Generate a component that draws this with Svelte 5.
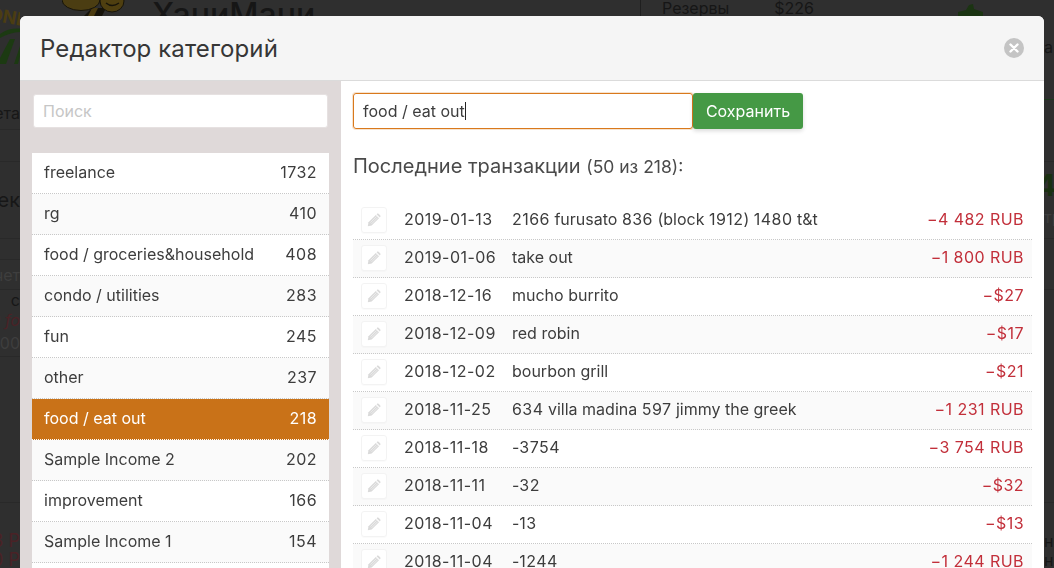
<script>
	const categories = [
		['freelance', 1732],
		['rg', 410],
		['food / groceries&household', 408],
		['condo / utilities', 283],
		['fun', 245],
		['other', 237],
		['food / eat out', 218],
		['Sample Income 2', 202],
		['improvement', 166],
		['Sample Income 1', 154],
		['travel', 121]
	];

	const transactions = [
		['2019-01-13', '2166 furusato 836 (block 1912) 1480 t&t', '−4 482 RUB'],
		['2019-01-06', 'take out', '−1 800 RUB'],
		['2018-12-16', 'mucho burrito', '−$27'],
		['2018-12-09', 'red robin', '−$17'],
		['2018-12-02', 'bourbon grill', '−$21'],
		['2018-11-25', '634 villa madina 597 jimmy the greek', '−1 231 RUB'],
		['2018-11-18', '-3754', '−3 754 RUB'],
		['2018-11-11', '-32', '−$32'],
		['2018-11-04', '-13', '−$13'],
		['2018-11-04', '-1244', '−1 244 RUB']
	];

	// rows of the page behind the modal: height, text, kind
	const leftRows = [
		[30, '', ''],
		[34, 'ета', 'line'],
		[32, '', 'line'],
		[77, 'ек', 'line big'],
		[21, '', 'line'],
		[30, 'счет', 'line faint'],
		[20, 'с', ''],
		[20, '9 fo', 'red italic'],
		[27, '000', 'faint line'],
		[146, '', 'line'],
		[27, '', ''],
		[20, '23 Р', 'red'],
		[18, '00 Р', 'red']
	];

	const rightRows = [
		[34, '', ''],
		[26, 'а', ''],
		[40, '', 'green-line'],
		[62, '', 'line'],
		[45, '4', 'digit'],
		[19, 'тр', 'faint'],
		[13, '', 'line'],
		[51, '', 'line'],
		[213, '', 'line'],
		[27, '', ''],
		[22, 'но,', ''],
		[16, 'но', '']
	];

	const selected = 'food / eat out';
</script>

<div class="page">
	<div class="strip left">
		<svg class="logo-part" width="20" height="66" viewBox="0 0 20 66">
			<text x="-12" y="22" class="logo-word" transform="rotate(10 0 22)">ONEY</text>
			<path d="M0 34 Q10 27 24 29 L24 32 Q12 31 0 38 Z" fill="#1c3a12" />
			<path d="M0 64 L0 58 L10 39 L15 39 L6 64 Z M14 64 L20 46 L20 56 L18 64 Z" fill="#1c3a12" />
		</svg>
		{#each leftRows as [height, text, kind]}
			<div class="strip-row {kind}" style="height: {height}px">{text}</div>
		{/each}
	</div>

	<div class="top">
		<svg class="bee" width="64" height="16" viewBox="0 0 64 16">
			<path d="M22 16 L30 8 L44 8 L40 16 Z" fill="#16130a" />
			<path d="M30 8 L36 8 L32 16 L26 16 Z" fill="#4b3b10" />
			<ellipse cx="19" cy="0" rx="19" ry="10.5" fill="#4b3d12" stroke="#17140a" />
			<ellipse cx="50" cy="1" rx="12" ry="11" fill="#4f3f10" stroke="#17140a" />
			<path d="M44 3 Q50 8 57 3" fill="none" stroke="#17140a" stroke-width="1.4" />
		</svg>
		<span class="brand-name">ХаниМани</span>
		<div class="stats">
			<span>Резервы</span>
			<span>$226</span>
		</div>
		<svg class="plant" width="26" height="16" viewBox="0 0 26 16">
			<path d="M0 16 L0 12 L8 10 L11 5 L15 4 L16 9 L25 12 L25 16 Z" fill="#1b3412" />
		</svg>
	</div>

	<div class="strip right">
		{#each rightRows as [height, text, kind]}
			<div class="strip-row {kind}" style="height: {height}px">{text}</div>
		{/each}
	</div>

	<div class="modal">
		<header>
			<h1>Редактор категорий</h1>
			<button class="close" aria-label="Закрыть">
				<svg width="10" height="10" viewBox="0 0 10 10">
					<path d="M1.5 1.5 L8.5 8.5 M8.5 1.5 L1.5 8.5" stroke="#fff" stroke-width="2.4" stroke-linecap="round" />
				</svg>
			</button>
		</header>

		<div class="body">
			<aside>
				<input class="search" placeholder="Поиск" />
				<ul>
					{#each categories as [name, count]}
						<li class:active={name === selected}>
							<span>{name}</span>
							<span class="num">{count}</span>
						</li>
					{/each}
				</ul>
			</aside>

			<main>
				<div class="edit-row">
					<div class="name-input">food / eat out<i class="caret"></i></div>
					<button class="save">Сохранить</button>
				</div>

				<h2>Последние транзакции <small>(50 из 218):</small></h2>

				<div class="rows">
					{#each transactions as [date, title, amount]}
						<div class="row">
							<button class="edit" aria-label="Изменить">
								<svg width="14" height="14" viewBox="0 0 14 14">
									<path d="M0.8 13.2 L1.5 9.3 L8.8 2 L12 5.2 L4.7 12.5 Z" fill="#dadada" />
									<path d="M9.6 1.2 L10.3 0.6 Q11 0.2 11.6 0.7 L13.3 2.4 Q13.8 3 13.3 3.7 L12.8 4.4 Z" fill="#dadada" />
									<path d="M3.4 9.6 L9.6 3.4 M4.6 10.8 L10.8 4.6" stroke="#f7f7f7" stroke-width="0.6" />
								</svg>
							</button>
							<span class="date num">{date}</span>
							<span class="title">
								{#each title.split(/(\d+)/) as part, i}{#if i % 2}<span class="num">{part}</span>{:else}{part}{/if}{/each}
							</span>
							<span class="amount num">{amount}</span>
						</div>
					{/each}
				</div>
			</main>
		</div>
	</div>
</div>

<style>
	:global(body) {
		margin: 0;
		overflow: hidden;
		background: #2f2f2f;
	}

	.page {
		display: flex;
		height: 568px;
		font-family: Inter, "Liberation Sans", sans-serif;
		font-size: 16px;
		color: #3d3d3d;
		overflow: hidden;
	}

	.num {
		letter-spacing: 0.45px;
	}

	.strip {
		flex: none;
		overflow: hidden;
		color: #171717;
	}

	.strip.left {
		width: 20px;
	}

	.strip.right {
		width: 10px;
	}

	.logo-part {
		display: block;
	}

	.logo-word {
		font-size: 18px;
		font-weight: 700;
		fill: #4b3d12;
	}

	.strip-row {
		box-sizing: border-box;
		display: flex;
		align-items: center;
		white-space: nowrap;
	}

	.left .strip-row {
		justify-content: flex-end;
	}

	.strip-row.line {
		border-bottom: 1px solid #292929;
	}

	.strip-row.green-line {
		border-bottom: 1px solid #1d3a1d;
	}

	.strip-row.big {
		font-size: 20px;
	}

	.strip-row.faint {
		color: #3e3e3e;
	}

	.strip-row.red {
		color: #4a2226;
		font-size: 18px;
	}

	.strip-row.italic {
		font-style: italic;
		font-size: 16px;
	}

	.strip-row.digit {
		margin-left: -8px;
		font-size: 30px;
		font-weight: 700;
		color: #1a3012;
	}

	.top {
		flex: none;
		width: 1024px;
		height: 16px;
		display: flex;
		overflow: hidden;
		color: #161616;
	}

	.bee {
		flex: none;
		margin-left: 42px;
	}

	.brand-name {
		flex: none;
		width: 488px;
		margin: -5px 0 0 26px;
		font-size: 32px;
		font-weight: 500;
		line-height: 40px;
	}

	.stats {
		flex: none;
		display: flex;
		gap: 45px;
		width: 318px;
		box-sizing: border-box;
		padding-left: 21px;
		margin-top: -8px;
		border-left: 1px solid #1f1f1f;
		height: 30px;
		line-height: 32px;
	}

	.plant {
		flex: none;
	}

	.modal {
		position: fixed;
		top: 16px;
		left: 20px;
		width: 1024px;
		height: 552px;
		background: #fff;
		border-radius: 6px 6px 0 0;
		overflow: hidden;
		display: flex;
		flex-direction: column;
	}

	header {
		flex: none;
		box-sizing: border-box;
		height: 65px;
		padding: 0 20px;
		display: flex;
		align-items: center;
		justify-content: space-between;
		background: #f5f5f5;
		border-bottom: 1px solid #dbdbdb;
	}

	h1 {
		margin: 0;
		font-size: 24px;
		font-weight: 400;
		letter-spacing: 0.1px;
		color: #363636;
	}

	.close {
		width: 20px;
		height: 20px;
		padding: 0;
		border: 0;
		border-radius: 50%;
		background: #c4c4c4;
		display: flex;
		align-items: center;
		justify-content: center;
	}

	.body {
		flex: 1;
		display: flex;
		min-height: 0;
	}

	aside {
		flex: none;
		box-sizing: border-box;
		width: 321px;
		padding: 13px 12px 0;
		background: #dfd9d9;
	}

	.search {
		display: block;
		box-sizing: border-box;
		width: 295px;
		height: 34px;
		margin: 0 1px 25px;
		padding: 0 9px;
		border: 1px solid #e6e1e1;
		border-radius: 3px;
		background: #fff;
		font: inherit;
		outline: none;
	}

	.search::placeholder {
		color: #c6c6c6;
	}

	ul {
		list-style: none;
		margin: 0;
		padding: 0;
		width: 297px;
	}

	li {
		box-sizing: border-box;
		height: 41px;
		padding: 0 12px 2px;
		display: flex;
		align-items: center;
		justify-content: space-between;
		background: #fff;
		border-bottom: 1px dotted #c8c8c8;
	}

	li:nth-child(even) {
		background: #fafafa;
	}

	li.active {
		background: #c97218;
		color: #fff;
		border-bottom-color: #fff;
	}

	main {
		flex: 1;
		min-width: 0;
		padding: 12px 12px 0;
	}

	.edit-row {
		display: flex;
	}

	.name-input {
		box-sizing: border-box;
		width: 340px;
		height: 36px;
		padding: 0 9px;
		display: flex;
		align-items: center;
		border: 1px solid #d9791c;
		border-radius: 3px;
		box-shadow: 0 0 0 1px #f6e3cf;
	}

	.caret {
		width: 1px;
		height: 18px;
		background: #222;
	}

	.save {
		box-sizing: border-box;
		width: 110px;
		height: 36px;
		padding: 0;
		border: 0;
		border-radius: 3px;
		background: #459945;
		color: #fff;
		font: inherit;
		box-shadow: 0 2px 4px rgba(0, 0, 0, 0.15);
	}

	h2 {
		margin: 25px 0 23px;
		font-size: 20px;
		line-height: 24px;
		font-weight: 400;
		color: #4a4a4a;
	}

	h2 small {
		font-size: 17.5px;
	}

	.row {
		box-sizing: border-box;
		height: 38px;
		padding: 0 8px 3px;
		display: flex;
		align-items: center;
		border-bottom: 1px dotted #c8c8c8;
	}

	.row:nth-child(even) {
		background: #fafafa;
	}

	.edit {
		flex: none;
		box-sizing: border-box;
		width: 26px;
		height: 26px;
		margin-top: 1px;
		padding: 0;
		border: 1px solid #f3f3f3;
		border-radius: 3px;
		background: #fff;
		display: flex;
		align-items: center;
		justify-content: center;
		box-shadow: 0 1px 1px rgba(0, 0, 0, 0.02);
	}

	.date {
		flex: none;
		width: 108px;
		margin-left: 17px;
	}

	.title {
		flex: 1;
	}

	.amount {
		color: #c22f3a;
	}
</style>
